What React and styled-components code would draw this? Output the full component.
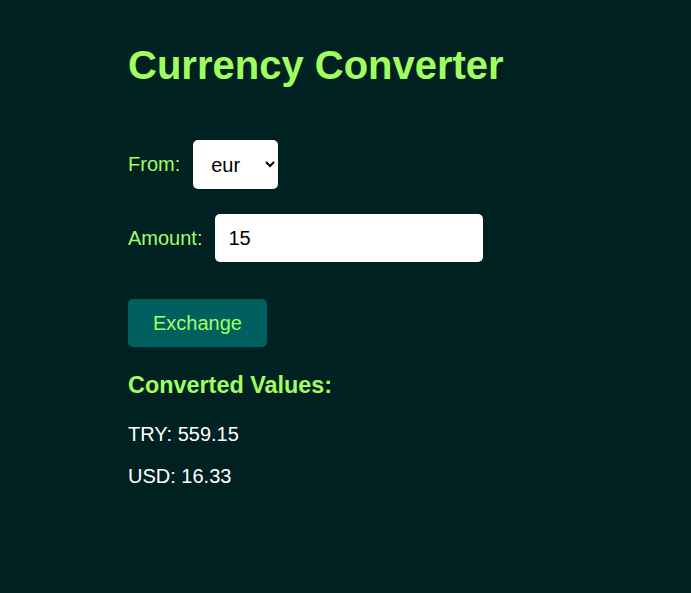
import React, { useState } from 'react'
import styled, { createGlobalStyle } from 'styled-components'

const GlobalStyle = createGlobalStyle`
  html, body {
    margin: 0;
    background: #002122;
  }
  body {
    font-family: "Liberation Sans", Arial, sans-serif;
    font-size: 20px;
  }
`;

const Page = styled.div`
  min-height: 593px;
  padding: 42px 128px 0 128px;
  box-sizing: border-box;
  background: #002122;
`;

const Title = styled.h1`
  margin: 0 0 52px 0;
  font-size: 40px;
  line-height: 46px;
  font-weight: bold;
  color: #a0ff5f;
`;

const Row = styled.div`
  display: flex;
  align-items: center;
  gap: 13px;
  margin-bottom: ${p => p.$gap || 0}px;
`;

const Label = styled.label`
  color: #a0ff5f;
  font-size: 20px;
`;

const Select = styled.select`
  width: 85px;
  height: 49px;
  border: none;
  border-radius: 5px;
  background: #fff;
  color: #000;
  font-family: inherit;
  font-size: 20px;
  padding: 0 6px 0 14px;
  outline: none;
`;

const Input = styled.input`
  width: 268px;
  height: 48px;
  box-sizing: border-box;
  border: none;
  border-radius: 5px;
  background: #fff;
  color: #000;
  font-family: inherit;
  font-size: 20px;
  padding: 0 13px;
  outline: none;
`;

const Button = styled.button`
  align-self: flex-start;
  width: 139px;
  height: 48px;
  border: none;
  border-radius: 5px;
  background: #005f5f;
  color: #a0ff5f;
  font-family: inherit;
  font-size: 20px;
  cursor: pointer;
  margin-bottom: 25px;
`;

const Form = styled.div`
  display: flex;
  flex-direction: column;
`;

const ResultsTitle = styled.h3`
  margin: 0 0 24px 0;
  font-size: 23.4px;
  font-weight: bold;
  color: #a0ff5f;
`;

const ResultLine = styled.p`
  margin: 0 0 19px 0;
  color: #fff;
  font-size: 20px;
  line-height: 23px;
`;

export default function App() {
  const [from, setFrom] = useState('eur')
  const [amount, setAmount] = useState('15')
  const results = [
    ['TRY', '559.15'],
    ['USD', '16.33'],
  ]

  return (
    <>
      <GlobalStyle />
      <Page>
        <Title>Currency Converter</Title>
        <Form>
          <Row $gap={25}>
            <Label>From:</Label>
            <Select value={from} onChange={e => setFrom(e.target.value)}>
              <option value="eur">eur</option>
              <option value="usd">usd</option>
              <option value="try">try</option>
            </Select>
          </Row>
          <Row $gap={37}>
            <Label>Amount:</Label>
            <Input value={amount} onChange={e => setAmount(e.target.value)} />
          </Row>
          <Button>Exchange</Button>
        </Form>
        <ResultsTitle>Converted Values:</ResultsTitle>
        {results.map(([code, value]) => (
          <ResultLine key={code}>{code}: {value}</ResultLine>
        ))}
      </Page>
    </>
  )
}
